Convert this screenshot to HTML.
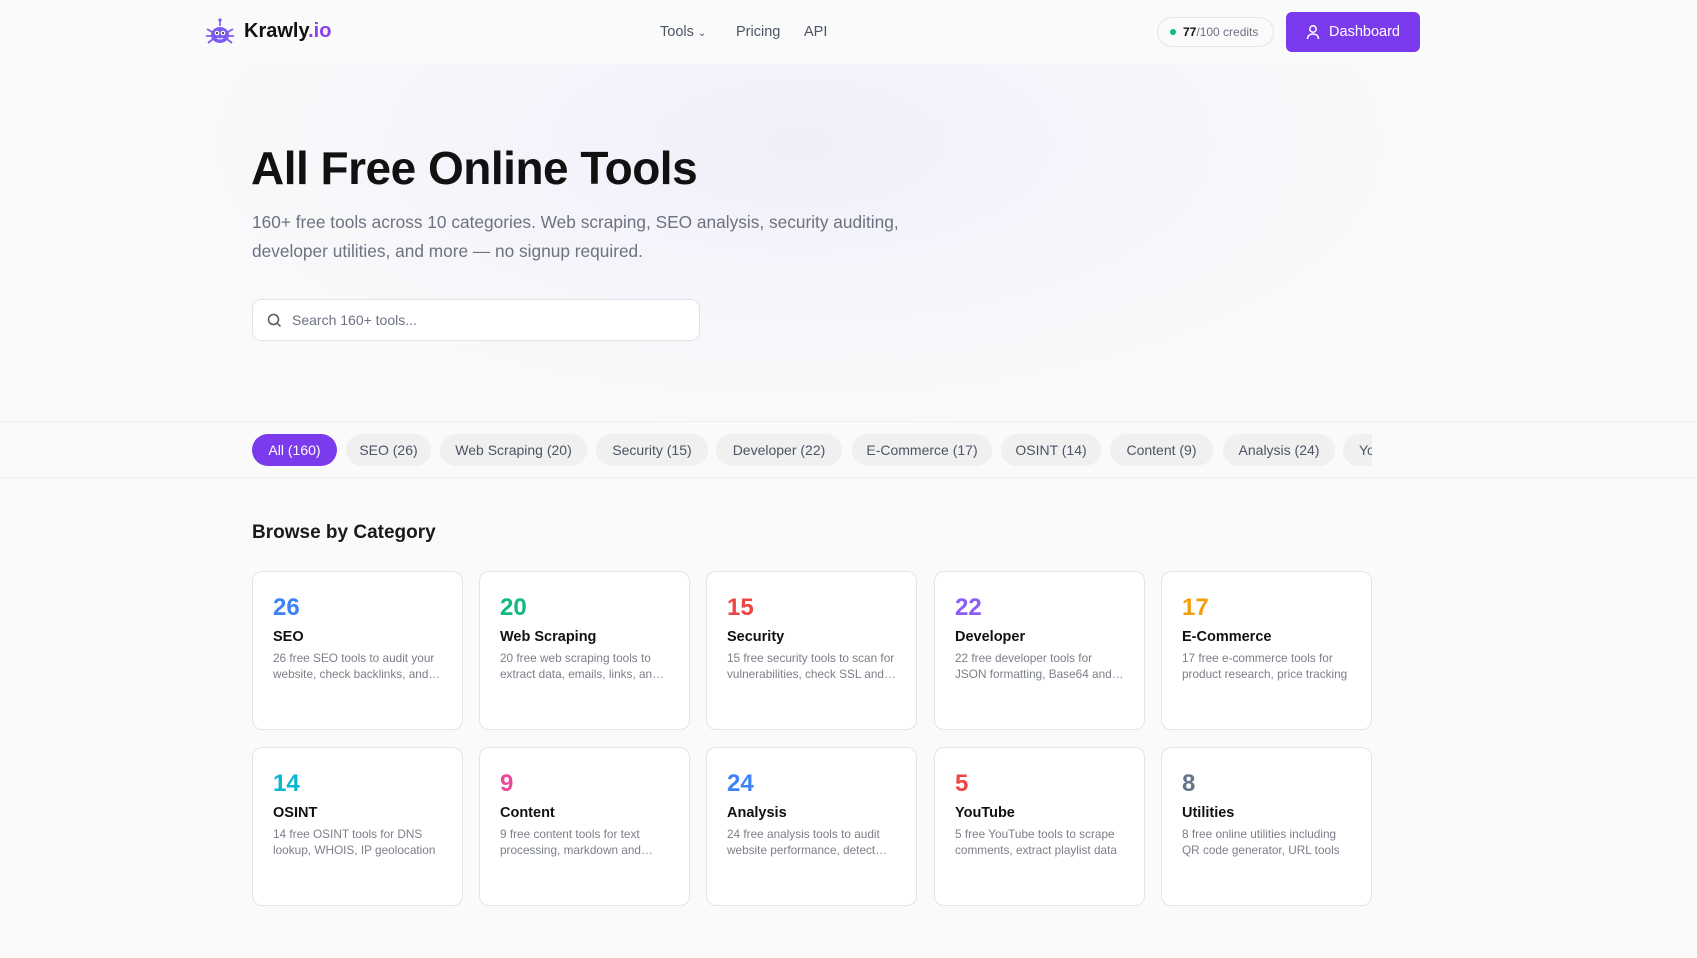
<!DOCTYPE html>
<html><head><meta charset="utf-8"><style>
*{box-sizing:border-box;margin:0;padding:0}
body{width:1697px;height:958px;overflow:hidden;background:#fafafa;font-family:"Liberation Sans",sans-serif;color:#111;position:relative}
.hero{position:absolute;left:0;top:64px;width:1697px;height:357px;background:radial-gradient(ellipse 700px 300px at 800px 80px,#f1eefa 0%,#f6f4fb 45%,#fafafa 100%)}
.abs{position:absolute}
.nav{font-size:14.5px;color:#4b5563;top:24px}
.pill{position:absolute;top:434px;height:32px;border-radius:16px;background:#f0f0f1;color:#4b5563;font-size:14px;display:flex;align-items:center;justify-content:center;white-space:nowrap;overflow:hidden}
.card{position:absolute;width:211px;height:159px;background:#fff;border:1px solid #e5e5e7;border-radius:10px;padding:22px 20px}
.card .n{font-size:24px;font-weight:bold;line-height:28px}
.card .t{font-size:14.5px;font-weight:bold;margin-top:5px;line-height:20px}
.card .d{font-size:11.8px;color:#7b7f88;line-height:16px;margin-top:3px;display:-webkit-box;-webkit-line-clamp:2;-webkit-box-orient:vertical;overflow:hidden}
</style></head><body>
<div class="hero"></div>
<svg class="abs" style="left:205px;top:18px" width="30" height="28" viewBox="0 0 30 28"><line x1="15" y1="2" x2="15" y2="8" stroke="#7c5cf0" stroke-width="1.6"/><circle cx="15" cy="2" r="1.6" fill="#7c5cf0"/><g stroke="#7c5cf0" stroke-width="1.8" fill="none"><path d="M7 14L2 11M7 18L1 18M8 21L3 25M23 14L28 11M23 18L29 18M22 21L27 25"/></g><ellipse cx="15" cy="17" rx="9" ry="8" fill="#7c5cf0"/><circle cx="12" cy="15" r="2.3" fill="#fff"/><circle cx="18" cy="15" r="2.3" fill="#fff"/><circle cx="12" cy="15" r="1" fill="#222"/><circle cx="18" cy="15" r="1" fill="#222"/><path d="M12 20q3 2 6 0" stroke="#fff" stroke-width="1" fill="none"/></svg>
<div class="abs" style="left:244px;top:20px;font-size:20px;font-weight:bold;color:#111">Krawly<span style="color:#8b3ff0">.io</span></div>
<div class="abs nav" style="left:660px">Tools <span style="font-size:10px">&#8964;</span></div>
<div class="abs nav" style="left:736px">Pricing</div>
<div class="abs nav" style="left:804px">API</div>
<div class="abs" style="left:1157px;top:17px;width:117px;height:30px;border:1px solid #e5e5e5;border-radius:15px;font-size:12px;color:#6b7280;display:flex;align-items:center;padding-left:12px"><span style="width:6px;height:6px;border-radius:3px;background:#10b981;margin-right:7px"></span><b style="color:#111">77</b>/100 credits</div>
<div class="abs" style="left:1286px;top:12px;width:134px;height:40px;background:#7c3aed;border-radius:6px;color:#fff;font-size:14.5px;display:flex;align-items:center;justify-content:center"><svg width="14" height="16" viewBox="0 0 14 16" style="margin-right:9px"><circle cx="7" cy="5" r="3.2" stroke="#fff" stroke-width="1.5" fill="none"/><path d="M1.5 15c0-3.5 2.5-5 5.5-5s5.5 1.5 5.5 5" stroke="#fff" stroke-width="1.5" fill="none"/></svg>Dashboard</div>

<div class="abs" style="left:251px;top:141px;font-size:46px;font-weight:bold;letter-spacing:-0.5px;color:#111">All Free Online Tools</div>
<div class="abs" style="left:252px;top:208px;font-size:17.3px;line-height:29px;color:#6b7280;width:700px">160+ free tools across 10 categories. Web scraping, SEO analysis, security auditing, developer utilities, and more — no signup required.</div>
<div class="abs" style="left:252px;top:299px;width:448px;height:42px;background:#fff;border:1px solid #e3e3e6;border-radius:9px;display:flex;align-items:center;padding-left:14px;font-size:14px;color:#6b7280"><svg width="15" height="15" viewBox="0 0 15 15" style="margin-right:10px"><circle cx="6.5" cy="6.5" r="5" stroke="#555" stroke-width="1.5" fill="none"/><path d="M10 10l3.5 3.5" stroke="#555" stroke-width="1.5"/></svg>Search 160+ tools...</div>

<div class="abs" style="left:0;top:421px;width:1697px;height:57px;background:#fafafa;border-top:1px solid #efeff1;border-bottom:1px solid #efeff1"></div>
<div class="pill" style="left:252px;width:85px;background:#7c3aed;color:#fff">All (160)</div>
<div class="pill" style="left:346px;width:85px">SEO (26)</div>
<div class="pill" style="left:440px;width:147px">Web Scraping (20)</div>
<div class="pill" style="left:596px;width:112px">Security (15)</div>
<div class="pill" style="left:716px;width:126px">Developer (22)</div>
<div class="pill" style="left:852px;width:140px">E-Commerce (17)</div>
<div class="pill" style="left:1001px;width:100px">OSINT (14)</div>
<div class="pill" style="left:1110px;width:103px">Content (9)</div>
<div class="pill" style="left:1223px;width:112px">Analysis (24)</div>
<div class="pill" style="left:1343px;width:29px;border-radius:16px 0 0 16px;justify-content:flex-start;padding-left:16px">YouTube (5)</div>

<div class="abs" style="left:252px;top:522px;font-size:19px;font-weight:bold;color:#1a1a1a">Browse by Category</div>

<div class="card" style="left:252px;top:571px"><div class="n" style="color:#3b82f6">26</div><div class="t">SEO</div><div class="d">26 free SEO tools to audit your website, check backlinks, and more</div></div>
<div class="card" style="left:479px;top:571px"><div class="n" style="color:#10b981">20</div><div class="t">Web Scraping</div><div class="d">20 free web scraping tools to extract data, emails, links, and more</div></div>
<div class="card" style="left:706px;top:571px"><div class="n" style="color:#ef4444">15</div><div class="t">Security</div><div class="d">15 free security tools to scan for vulnerabilities, check SSL and more</div></div>
<div class="card" style="left:934px;top:571px"><div class="n" style="color:#8b5cf6">22</div><div class="t">Developer</div><div class="d">22 free developer tools for JSON formatting, Base64 and more</div></div>
<div class="card" style="left:1161px;top:571px"><div class="n" style="color:#f59e0b">17</div><div class="t">E-Commerce</div><div class="d">17 free e-commerce tools for product research, price tracking</div></div>
<div class="card" style="left:252px;top:747px"><div class="n" style="color:#06b6d4">14</div><div class="t">OSINT</div><div class="d">14 free OSINT tools for DNS lookup, WHOIS, IP geolocation</div></div>
<div class="card" style="left:479px;top:747px"><div class="n" style="color:#ec4899">9</div><div class="t">Content</div><div class="d">9 free content tools for text processing, markdown and more</div></div>
<div class="card" style="left:706px;top:747px"><div class="n" style="color:#3b82f6">24</div><div class="t">Analysis</div><div class="d">24 free analysis tools to audit website performance, detect tech</div></div>
<div class="card" style="left:934px;top:747px"><div class="n" style="color:#ef4444">5</div><div class="t">YouTube</div><div class="d">5 free YouTube tools to scrape comments, extract playlist data</div></div>
<div class="card" style="left:1161px;top:747px"><div class="n" style="color:#64748b">8</div><div class="t">Utilities</div><div class="d">8 free online utilities including QR code generator, URL tools</div></div>
</body></html>
